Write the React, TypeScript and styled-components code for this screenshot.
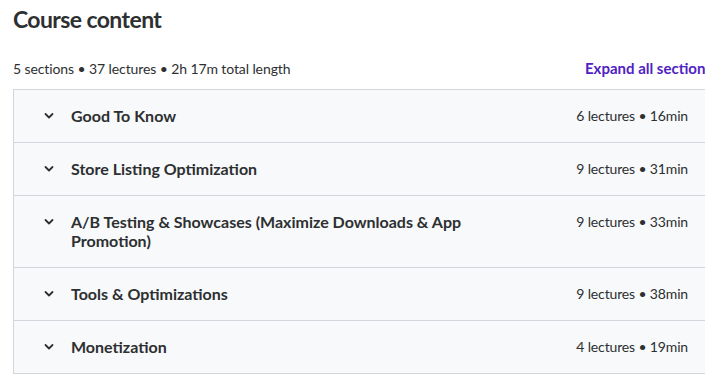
import React from "react";
import styled, { createGlobalStyle } from "styled-components";

const Global = createGlobalStyle`
  html, body { margin: 0; padding: 0; background: #fff; overflow: hidden; }
  body { font-family: Lato, "Noto Sans", sans-serif; color: #2d2f31; }
`;

const Page = styled.div`
  width: 699px;
  padding: 0 0 0 13px;
`;

const Title = styled.h2`
  margin: 0;
  padding-top: 5px;
  font-size: 23px;
  line-height: 28px;
  font-weight: 700;
  letter-spacing: -0.6px;
  color: #2d2f31;
`;

const SubBar = styled.div`
  display: flex;
  justify-content: space-between;
  align-items: center;
  margin-top: 25px;
  height: 20px;
  margin-bottom: 11px;
`;

const Summary = styled.span`
  font-size: 14px;
  letter-spacing: -0.1px;
  color: #2d2f31;
`;

const ExpandButton = styled.button`
  border: 0;
  background: none;
  padding: 0;
  font-family: inherit;
  font-size: 15px;
  font-weight: 700;
  color: #5022c3;
  white-space: nowrap;
`;

const List = styled.div`
  border: 1px solid #d1d7dc;
  border-right: 0;
`;

const Row = styled.div<{ $last?: boolean }>`
  display: flex;
  align-items: flex-start;
  background: #f7f9fa;
  padding: 16px 24px 17px 27px;
  border-bottom: ${(p) => (p.$last ? "0" : "1px solid #d1d7dc")};
`;

const Chevron = styled.svg`
  flex: none;
  width: 16px;
  height: 19px;
  margin-right: 14px;
`;

const SectionTitle = styled.span`
  flex: 1;
  max-width: 420px;
  font-size: 16px;
  line-height: 19px;
  font-weight: 700;
  color: #2d2f31;
`;

const Meta = styled.span`
  margin-left: auto;
  font-size: 14px;
  line-height: 19px;
  letter-spacing: -0.15px;
  color: #2d2f31;
  white-space: nowrap;
`;

const sections = [
  { title: "Good To Know", meta: "6 lectures • 16min" },
  { title: "Store Listing Optimization", meta: "9 lectures • 31min" },
  { title: "A/B Testing & Showcases (Maximize Downloads & App Promotion)", meta: "9 lectures • 33min" },
  { title: "Tools & Optimizations", meta: "9 lectures • 38min" },
  { title: "Monetization", meta: "4 lectures • 19min" },
];

export default function App() {
  return (
    <Page>
      <Global />
      <Title>Course content</Title>
      <SubBar>
        <Summary>5 sections • 37 lectures • 2h 17m total length</Summary>
        <ExpandButton>Expand all sections</ExpandButton>
      </SubBar>
      <List>
        {sections.map((s, i) => (
          <Row key={s.title} $last={i === sections.length - 1}>
            <Chevron viewBox="0 0 16 19">
              <path d="M4.5 8 L8 11.5 L11.5 8" fill="none" stroke="#2d2f31" strokeWidth="1.8" strokeLinecap="round" strokeLinejoin="round" />
            </Chevron>
            <SectionTitle>{s.title}</SectionTitle>
            <Meta>{s.meta}</Meta>
          </Row>
        ))}
      </List>
    </Page>
  );
}
